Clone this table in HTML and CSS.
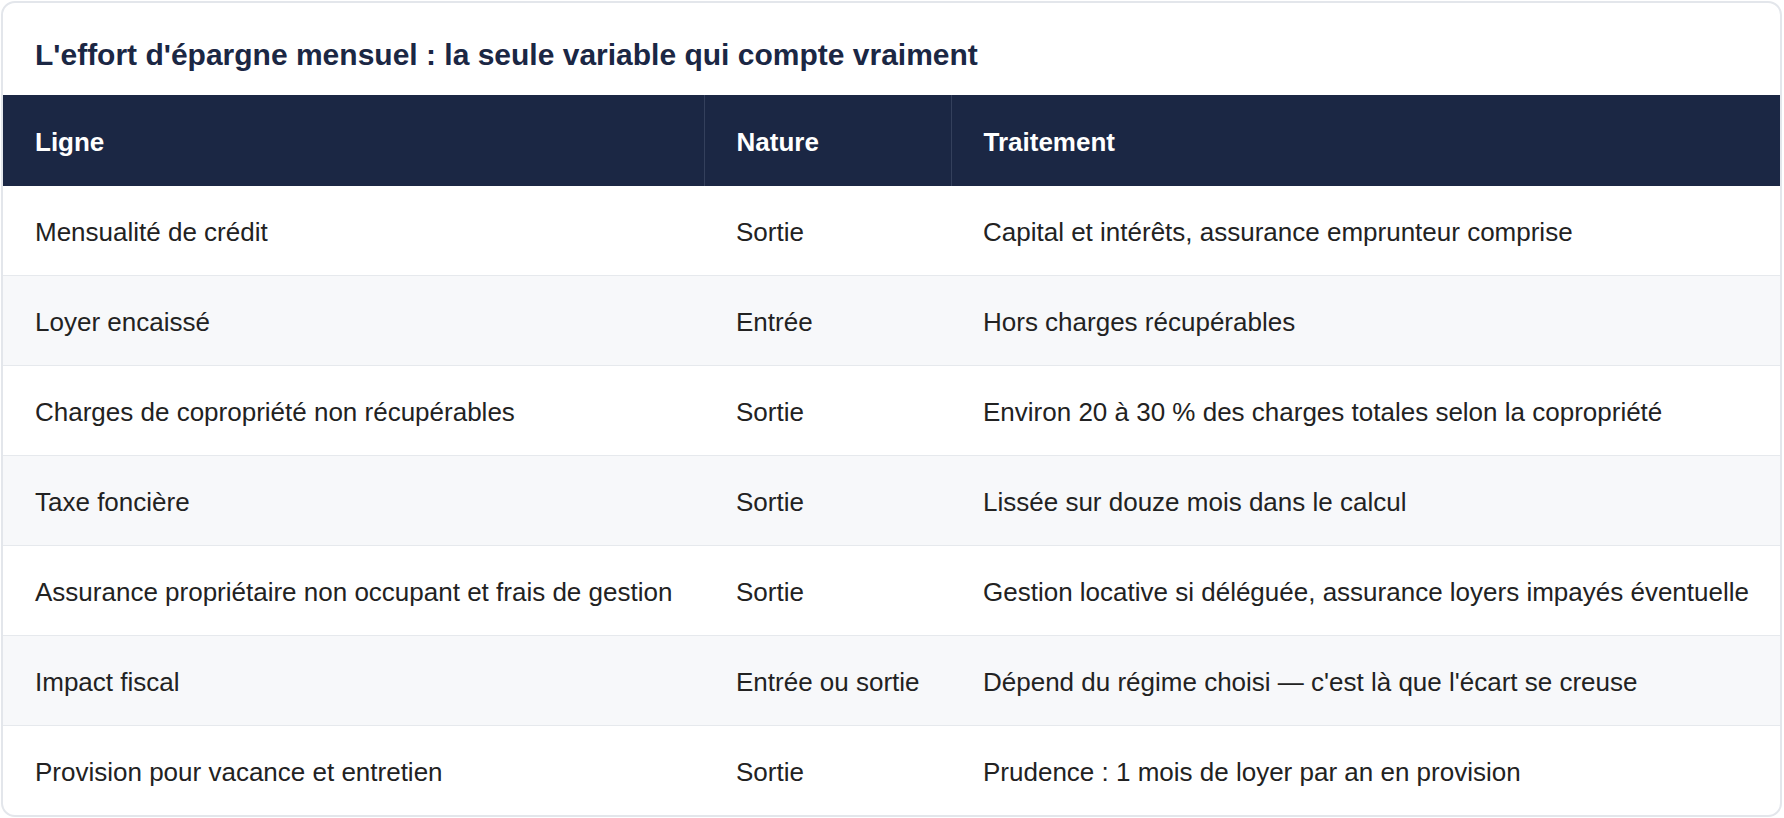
FILE: index.html
```html
<!DOCTYPE html>
<html lang="fr">
<head>
<meta charset="utf-8">
<title>L'effort d'épargne mensuel</title>
<link rel="stylesheet" href="styles.css">
</head>
<body>
<div class="page">
  <section class="card">
    <h2 class="card-title">L'effort d'épargne mensuel : la seule variable qui compte vraiment</h2>
    <table class="data">
      <colgroup>
        <col class="c1">
        <col class="c2">
        <col class="c3">
      </colgroup>
      <thead>
        <tr><th>Ligne</th><th>Nature</th><th>Traitement</th></tr>
      </thead>
      <tbody>
        <tr><td>Mensualité de crédit</td><td>Sortie</td><td>Capital et intérêts, assurance emprunteur comprise</td></tr>
        <tr><td>Loyer encaissé</td><td>Entrée</td><td>Hors charges récupérables</td></tr>
        <tr><td>Charges de copropriété non récupérables</td><td>Sortie</td><td>Environ 20 à 30 % des charges totales selon la copropriété</td></tr>
        <tr><td>Taxe foncière</td><td>Sortie</td><td>Lissée sur douze mois dans le calcul</td></tr>
        <tr><td>Assurance propriétaire non occupant et frais de gestion</td><td>Sortie</td><td>Gestion locative si déléguée, assurance loyers impayés éventuelle</td></tr>
        <tr><td>Impact fiscal</td><td>Entrée ou sortie</td><td>Dépend du régime choisi — c'est là que l'écart se creuse</td></tr>
        <tr><td>Provision pour vacance et entretien</td><td>Sortie</td><td>Prudence : 1 mois de loyer par an en provision</td></tr>
      </tbody>
    </table>
  </section>
</div>
</body>
</html>
```
FILE: styles.css
```css
html, body {
  margin: 0;
  padding: 0;
  background: #ffffff;
}
body {
  font-family: "Liberation Sans", Arial, Helvetica, sans-serif;
  color: #222222;
}
.page {
  padding: 1px 2px 2px 1px;
}
.card {
  border: 2px solid #e3e6eb;
  border-radius: 14px;
  overflow: hidden;
  background: #ffffff;
}
.card-title {
  margin: 0;
  padding: 32px 32px 20px 32px;
  font-size: 30px;
  line-height: 40px;
  font-weight: 700;
  color: #1b2744;
}
.data {
  width: 100%;
  border-collapse: collapse;
  table-layout: fixed;
  font-size: 26px;
  line-height: 38px;
}
.c1 { width: 701px; }
.c2 { width: 247px; }
.data th {
  background: #1b2744;
  color: #ffffff;
  font-weight: 700;
  text-align: left;
  padding: 28px 32px 25px 32px;
  border-left: 1.5px solid #34405c;
}
.data th:first-child {
  border-left: none;
}
.data td {
  padding: 26.5px 32px 24.5px 32px;
  border-top: 1px solid #e6e9ed;
  white-space: nowrap;
}
.data tbody tr:first-child td {
  border-top: none;
}
.data tbody tr:nth-child(even) td {
  background: #f7f8fa;
}
```
